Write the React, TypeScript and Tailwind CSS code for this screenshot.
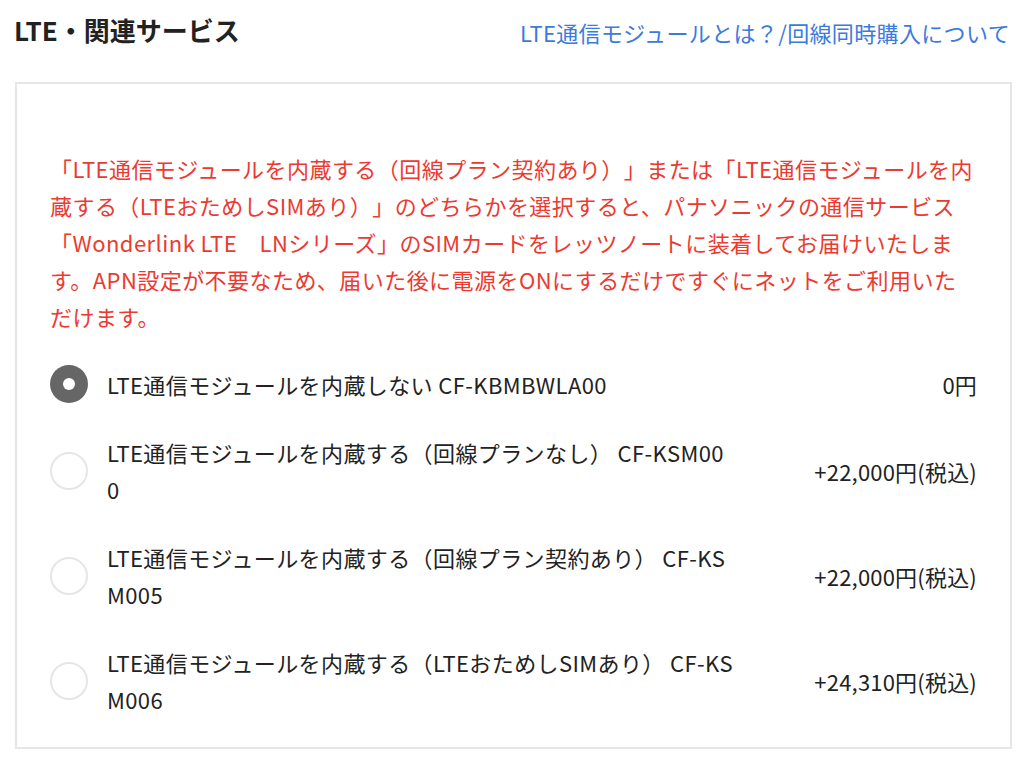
import React from "react";

const font = "font-['Noto_Sans_CJK_JP','Noto_Sans',sans-serif]";

const options = [
  { label: "LTE通信モジュールを内蔵しない CF-KBMBWLA00", price: "0円", selected: true },
  { label: "LTE通信モジュールを内蔵する（回線プランなし） CF-KSM000", price: "+22,000円(税込)" },
  { label: "LTE通信モジュールを内蔵する（回線プラン契約あり） CF-KSM005", price: "+22,000円(税込)" },
  { label: "LTE通信モジュールを内蔵する（LTEおためしSIMあり） CF-KSM006", price: "+24,310円(税込)" },
];

export default function App() {
  return (
    <div className={`${font} [text-spacing-trim:space-all] w-[1024px] h-[758px] bg-white text-[#222] overflow-hidden`}>
      <div className="flex items-center justify-between pl-[14px] pr-[14px] pt-[10px] h-[50px]">
        <h2 className="text-[26px] font-bold leading-none">LTE・関連サービス</h2>
        <a className="text-[22px] leading-none tracking-[0.35px] text-[#3a7bdc] mt-[4px]">LTE通信モジュールとは？/回線同時購入について</a>
      </div>
      <div className="mx-[15px] mt-[32px] w-[997px] h-[667px] border-2 border-[#e6e6e6] pl-[33px] pr-[33px] pt-[66px] pb-[28px]">
        <p className="text-[#ec3a30] text-[22px] leading-[37px] tracking-[0.45px] whitespace-nowrap">
          「LTE通信モジュールを内蔵する（回線プラン契約あり）」または「LTE通信モジュールを内
          <br />
          蔵する（LTEおためしSIMあり）」のどちらかを選択すると、パナソニックの通信サービス
          <br />
          「Wonderlink LTE　LNシリーズ」のSIMカードをレッツノートに装着してお届けいたしま
          <br />
          す。APN設定が不要なため、届いた後に電源をONにするだけですぐにネットをご利用いた
          <br />
          だけます。
        </p>
        <div className="mt-[30px] flex flex-col gap-[31px]">
          {options.map((o, i) => (
            <div key={i} className="flex items-center">
              {o.selected ? (
                <div className="w-[38px] h-[38px] rounded-full bg-[#666] flex items-center justify-center shrink-0">
                  <div className="w-[12px] h-[12px] rounded-full bg-white" />
                </div>
              ) : (
                <div className="w-[38px] h-[38px] rounded-full border-2 border-[#e6e6e6] bg-white shrink-0" />
              )}
              <div className="ml-[19px] w-[627px] text-[22px] leading-[37px] tracking-[0.4px] break-all">{o.label}</div>
              <div className="flex-1 text-right text-[22px] leading-[37px] tracking-[0.2px]">{o.price}</div>
            </div>
          ))}
        </div>
      </div>
    </div>
  );
}
